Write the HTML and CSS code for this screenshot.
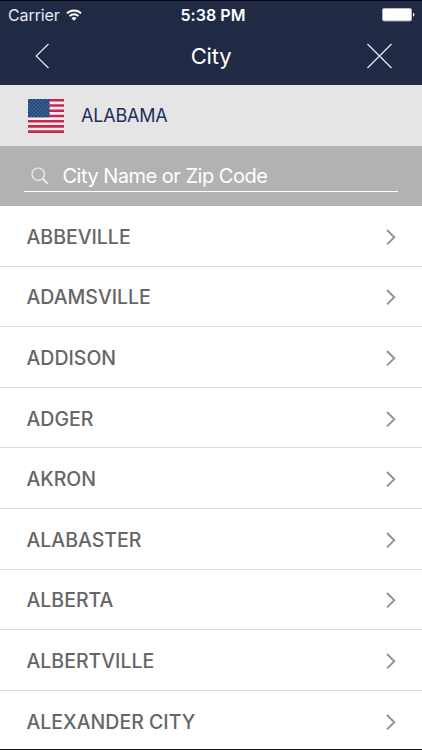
FILE: index.html
```html
<!DOCTYPE html>
<html lang="en">
<head>
    <meta charset="UTF-8">
    <meta name="viewport" content="width=device-width, initial-scale=1.0">
    <title>City</title>
    <link rel="stylesheet" href="styles.css">
</head>
<body>
    <svg width="0" height="0" class="defs">
        <symbol id="arrow" viewBox="0 0 12 18">
            <path d="M2 2 L9.3 9.2 L2 16.4" fill="none" stroke="#929292" stroke-width="1.9"/>
        </symbol>
        <pattern id="stars" width="3.6" height="3.6" patternUnits="userSpaceOnUse">
            <rect width="3.6" height="3.6" fill="#1c4379"/>
            <circle cx="0.9" cy="0.9" r="0.6" fill="#7fa3c0"/>
            <circle cx="2.7" cy="2.7" r="0.6" fill="#7fa3c0"/>
        </pattern>
    </svg>

    <!-- status bar + title -->
    <header class="header">
        <div class="status">
            <span class="carrier">Carrier</span>
            <svg class="wifi" width="16" height="12" viewBox="0 0 16 12">
                <path d="M1 4.4 A10 10 0 0 1 15 4.4" fill="none" stroke="#fff" stroke-width="2"/>
                <path d="M3.6 7.1 A6.3 6.3 0 0 1 12.4 7.1" fill="none" stroke="#fff" stroke-width="1.9"/>
                <path d="M8 11.8 L5.5 9.2 A3.6 3.6 0 0 1 10.5 9.2 Z" fill="#fff"/>
            </svg>
            <span class="time">5:38 PM</span>
            <svg class="battery" width="33" height="14" viewBox="0 0 33 14">
                <rect x="0.5" y="0.5" width="29" height="12.4" rx="1.6" fill="#fff" stroke="#b5b9c4"/>
                <path d="M31 4.7 Q32.4 5 32.4 6.8 Q32.4 8.5 31 8.8 Z" fill="#fff"/>
            </svg>
        </div>
        <div class="nav">
            <svg class="back" width="16" height="26" viewBox="0 0 16 26">
                <path d="M14.5 1 L2.2 13 L14.5 25" fill="none" stroke="#e4e6ea" stroke-width="1.2"/>
            </svg>
            <h1 class="title">City</h1>
            <svg class="close" width="26" height="26" viewBox="0 0 26 26">
                <path d="M1.5 1 L25.5 25 M25.5 1 L1.5 25" fill="none" stroke="#e4e6ea" stroke-width="1.3"/>
            </svg>
        </div>
    </header>

    <div class="state">
        <svg class="flag" width="36" height="34" viewBox="0 0 36 34">
            <rect width="36" height="34" fill="#f8edf1"/>
            <path d="M0 1.3H36M0 6.5H36M0 11.75H36M0 17H36M0 22.2H36M0 27.4H36M0 32.6H36" stroke="#c9274d" stroke-width="2.6"/>
            <rect width="21.6" height="18.3" fill="url(#stars)"/>
        </svg>
        <span class="state-name">ALABAMA</span>
    </div>

    <div class="search">
        <div class="search-field">
            <svg width="18" height="18" viewBox="0 0 18 18">
                <circle cx="7.2" cy="7.2" r="6.2" fill="none" stroke="#f2f2f2" stroke-width="1.2"/>
                <path d="M11.7 11.7 L17 17" stroke="#f2f2f2" stroke-width="1.7"/>
            </svg>
            <span class="placeholder">City Name or Zip Code</span>
        </div>
    </div>

    <ul class="cities">
        <li><span>ABBEVILLE</span><svg class="arrow"><use href="#arrow"/></svg></li>
        <li><span>ADAMSVILLE</span><svg class="arrow"><use href="#arrow"/></svg></li>
        <li><span>ADDISON</span><svg class="arrow"><use href="#arrow"/></svg></li>
        <li><span>ADGER</span><svg class="arrow"><use href="#arrow"/></svg></li>
        <li><span>AKRON</span><svg class="arrow"><use href="#arrow"/></svg></li>
        <li><span>ALABASTER</span><svg class="arrow"><use href="#arrow"/></svg></li>
        <li><span>ALBERTA</span><svg class="arrow"><use href="#arrow"/></svg></li>
        <li><span>ALBERTVILLE</span><svg class="arrow"><use href="#arrow"/></svg></li>
        <li><span>ALEXANDER CITY</span><svg class="arrow"><use href="#arrow"/></svg></li>
    </ul>
</body>
</html>
```
FILE: styles.css
```css
* {
    box-sizing: border-box;
}

body {
    margin: 0;
    height: 750px;
    display: flex;
    flex-direction: column;
    overflow: hidden;
    background: #fff;
    border-top: 1px solid #060816;
    border-bottom: 1px solid #111;
    font-family: Inter, "Liberation Sans", sans-serif;
}

.defs {
    position: absolute; /* only holds shared shapes */
}

/* header */
.header {
    flex: none;
    height: 84px;
    background: #202a44;
    color: #fff;
}

.status {
    display: grid;
    grid-template-columns: 58px 1fr auto 1fr 55px;
    align-items: center;
    height: 28px;
    padding: 0 7px 0 8px;
    font-size: 16px;
}

.carrier {
    color: #e9ebef;
    letter-spacing: -0.1px;
}

.time {
    font-weight: 600;
    letter-spacing: 0.05px;
}

.battery {
    grid-column: 5;
    justify-self: end;
}

.nav {
    display: grid;
    grid-template-columns: 26px 1fr 30px;
    align-items: center;
    height: 56px;
    padding: 0 30px 2px 34px;
}

.title {
    margin: 0;
    text-align: center;
    font-size: 22px;
    font-weight: 400;
    letter-spacing: -0.2px;
}

.close {
    justify-self: end;
}

/* selected state */
.state {
    flex: none;
    display: flex;
    align-items: center;
    gap: 17px;
    height: 61px;
    padding-left: 28px;
    background: #e5e5e5;
    color: #202e5b;
    font-size: 18px;
    letter-spacing: -0.2px;
}

/* search */
.search {
    flex: none;
    height: 60px;
    padding: 15px 24px 0;
    background: #b2b2b2;
}

.search-field {
    display: flex;
    align-items: center;
    gap: 14px;
    height: 31px;
    padding-left: 6.5px;
    border-bottom: 1px solid #fff;
    color: #fff;
    font-size: 20px;
    letter-spacing: -0.5px;
}

/* list */
.cities {
    flex: none;
    margin: 0;
    padding: 0;
    list-style: none;
}

.cities li {
    display: flex;
    align-items: center;
    justify-content: space-between;
    height: 60.6px;
    padding: 2px 25px 0 26.5px;
    border-bottom: 1px solid #dcdcdc;
    color: #666;
    font-size: 19.5px;
    font-weight: 500;
}

.arrow {
    width: 12px;
    height: 18px;
}
```
